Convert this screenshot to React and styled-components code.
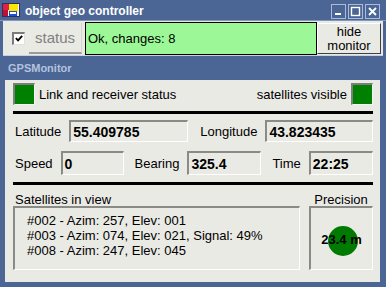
import styled, { createGlobalStyle } from "styled-components";

const GlobalStyle = createGlobalStyle`
  html, body {
    margin: 0;
    padding: 0;
    overflow: hidden;
    background: #4b6695;
  }
  body {
    font-family: "Liberation Sans", Arial, sans-serif;
  }
`;

const satellites = [
  "#002 - Azim: 257, Elev: 001",
  "#003 - Azim: 074, Elev: 021, Signal: 49%",
  "#008 - Azim: 247, Elev: 045",
];

const AppIcon = () => (
  <svg width="18" height="14" viewBox="0 0 18 14">
    <rect x="0.5" y="0.5" width="17" height="13" fill="#f4f4f4" stroke="#303060" />
    <rect x="1" y="1" width="6" height="6" fill="#e0204a" />
    <rect x="7" y="1" width="9" height="7" fill="#f8e800" />
    <rect x="1" y="7" width="5" height="6" fill="#c01030" />
    <rect x="7" y="8" width="8" height="5" fill="#2050d0" />
    <rect x="8" y="9" width="6" height="2" fill="#ffffff" />
  </svg>
);

const CtlIcon = ({ kind }) => (
  <svg width="13" height="13" viewBox="0 0 13 13">
    {kind === "min" && <rect x="3" y="8" width="6" height="2" fill="#ffffff" />}
    {kind === "max" && (
      <rect x="2.5" y="2.5" width="8" height="8" fill="none" stroke="#ffffff" strokeWidth="1.4" />
    )}
    {kind === "close" && (
      <path d="M3 3 L10 10 M10 3 L3 10" stroke="#ffffff" strokeWidth="1.8" />
    )}
  </svg>
);

const CheckMark = () => (
  <svg width="11" height="11" viewBox="0 0 11 11">
    <path d="M2 5 L4.5 7.5 L9 2.5" stroke="#000" strokeWidth="2" fill="none" />
  </svg>
);

export default function App() {
  return (
    <>
      <GlobalStyle />
      <Window>
        <TitleBar>
          <AppIcon />
          <Title>object geo controller</Title>
          <Controls>
            <CtlButton><CtlIcon kind="min" /></CtlButton>
            <CtlButton><CtlIcon kind="max" /></CtlButton>
            <CtlButton><CtlIcon kind="close" /></CtlButton>
          </Controls>
        </TitleBar>
        <Body>
          <Toolbar>
            <CheckBox><CheckMark /></CheckBox>
            <StatusButton>status</StatusButton>
            <StatusBox>Ok, changes: 8</StatusBox>
            <HideButton>hide<br />monitor</HideButton>
          </Toolbar>
          <ChildCaption>GPSMonitor</ChildCaption>
          <Panel>
            <StatusRow>
              <LedLabel>
                <Led />
                <span>Link and receiver status</span>
              </LedLabel>
              <LedLabel>
                <span>satellites visible</span>
                <Led />
              </LedLabel>
            </StatusRow>
            <Separator />
            <FieldRow $top={6}>
              <Label>Latitude</Label>
              <Field $w={119}>55.409785</Field>
              <Label $ml={12}>Longitude</Label>
              <Field $grow>43.823435</Field>
            </FieldRow>
            <FieldRow $top={9} $h={24}>
              <Label>Speed</Label>
              <Field $w={63}>0</Field>
              <Label $ml={11}>Bearing</Label>
              <Field $w={74}>325.4</Field>
              <Label $ml={11}>Time</Label>
              <Field $grow>22:25</Field>
            </FieldRow>
            <Separator $top={7} />
            <BottomGrid>
              <Caption>Satellites in view</Caption>
              <Caption $center>Precision</Caption>
              <SatList>
                {satellites.map((s) => (
                  <SatItem key={s}>{s}</SatItem>
                ))}
              </SatList>
              <PrecisionBox>
                <Dot />
                <PrecisionValue>23.4 m</PrecisionValue>
              </PrecisionBox>
            </BottomGrid>
          </Panel>
        </Body>
      </Window>
    </>
  );
}

const Window = styled.div`
  width: 386px;
  height: 287px;
  background: #4b6695;
  display: flex;
  flex-direction: column;
`;

const TitleBar = styled.div`
  height: 21px;
  display: flex;
  align-items: center;
  padding: 0 6px 0 2px;
  box-sizing: border-box;
  border-bottom: 1px solid #8498be;
`;

const Title = styled.div`
  margin-left: 5px;
  color: #ffffff;
  font-weight: bold;
  font-size: 12px;
  flex: 1;
  padding-top: 1px;
`;

const Controls = styled.div`
  display: flex;
  gap: 2px;
  margin-top: 2px;
`;

const CtlButton = styled.div`
  width: 15px;
  height: 15px;
  box-sizing: border-box;
  border: 1px solid #a9bcdf;
  display: flex;
  align-items: center;
  justify-content: center;
`;

const Body = styled.div`
  flex: 1;
  display: flex;
  flex-direction: column;
  padding: 0 3px 5px 3px;
`;

const Toolbar = styled.div`
  height: 34px;
  background: #eaeae5;
  display: flex;
  align-items: center;
  padding: 0 2px 0 9px;
  border-bottom: 1px solid #c8d0e0;
`;

const CheckBox = styled.div`
  width: 13px;
  height: 13px;
  box-sizing: border-box;
  background: #ffffff;
  border-style: solid;
  border-width: 2px 1px 1px 2px;
  border-color: #7a7a7a #e0e0e0 #e0e0e0 #7a7a7a;
  display: flex;
  align-items: center;
  justify-content: center;
`;

const StatusButton = styled.div`
  width: 53px;
  height: 31px;
  margin-left: 4px;
  box-sizing: border-box;
  border-bottom: 2px solid #9a9a96;
  border-right: 1px solid #d4d4d0;
  display: flex;
  align-items: center;
  justify-content: center;
  color: #808080;
  font-size: 15px;
`;

const StatusBox = styled.div`
  flex: 1;
  height: 33px;
  margin-left: 3px;
  box-sizing: border-box;
  background: #9cf896;
  border: 1px solid #000000;
  display: flex;
  align-items: center;
  padding-left: 2px;
  font-size: 13px;
  color: #000000;
`;

const HideButton = styled.div`
  width: 64px;
  height: 31px;
  box-sizing: border-box;
  border: 1px solid;
  border-color: #ffffff #404040 #404040 #ffffff;
  background: #eaeae5;
  text-align: center;
  font-size: 13px;
  line-height: 14px;
  padding-top: 1px;
  color: #000000;
`;

const ChildCaption = styled.div`
  height: 24px;
  display: flex;
  align-items: center;
  padding-left: 5px;
  color: #b4c2de;
  font-weight: bold;
  font-size: 11px;
`;

const Panel = styled.div`
  flex: 1;
  margin: 0 3px 0 2px;
  background: #eaeae5;
  padding: 3px 7px 0 8px;
  display: flex;
  flex-direction: column;
  font-size: 13px;
  color: #000000;
`;

const StatusRow = styled.div`
  height: 22px;
  display: flex;
  align-items: center;
  justify-content: space-between;
`;

const LedLabel = styled.div`
  display: flex;
  align-items: center;
  gap: 4px;
  font-size: 13px;
`;

const Led = styled.div`
  width: 22px;
  height: 22px;
  box-sizing: border-box;
  background: #008000;
  border-style: solid;
  border-width: 2px 1px 1px 2px;
  border-color: #7d7d7d #f4f4f4 #f4f4f4 #7d7d7d;
`;

const Separator = styled.div`
  height: 3px;
  background: #000000;
  margin-top: ${(p) => p.$top ?? 6}px;
`;

const FieldRow = styled.div`
  height: ${(p) => p.$h ?? 22}px;
  margin-top: ${(p) => p.$top}px;
  display: flex;
  align-items: center;
  padding-left: 2px;
`;

const Label = styled.span`
  margin-left: ${(p) => p.$ml ?? 0}px;
  margin-right: 8px;
  font-size: 13px;
`;

const Field = styled.div`
  ${(p) => (p.$grow ? "flex: 1;" : `width: ${p.$w}px;`)}
  height: 100%;
  box-sizing: border-box;
  border-style: solid;
  border-width: 2px 1px 1px 2px;
  border-color: #8a8a86 #ffffff #ffffff #8a8a86;
  display: flex;
  align-items: center;
  padding-left: 2px;
  font-weight: bold;
  font-size: 14px;
`;

const BottomGrid = styled.div`
  margin-top: 8px;
  display: grid;
  grid-template-columns: 1fr 64px;
  grid-template-rows: 13px 64px;
  column-gap: 9px;
`;

const Caption = styled.div`
  font-size: 13px;
  line-height: 13px;
  padding-left: ${(p) => (p.$center ? 0 : 2)}px;
  text-align: ${(p) => (p.$center ? "center" : "left")};
`;

const Sunken = styled.div`
  box-sizing: border-box;
  border-style: solid;
  border-width: 2px 1px 1px 2px;
  border-color: #8a8a86 #ffffff #ffffff #8a8a86;
`;

const SatList = styled(Sunken)`
  padding: 5px 0 0 12px;
`;

const SatItem = styled.div`
  font-size: 13px;
  line-height: 15px;
`;

const PrecisionBox = styled(Sunken)`
  position: relative;
  display: flex;
  align-items: center;
  justify-content: center;
`;

const Dot = styled.div`
  position: absolute;
  width: 30px;
  height: 30px;
  border-radius: 50%;
  background: #007a00;
  left: 17px;
  top: 18px;
`;

const PrecisionValue = styled.span`
  position: relative;
  font-weight: bold;
  font-size: 13px;
  margin-top: 2px;
`;
